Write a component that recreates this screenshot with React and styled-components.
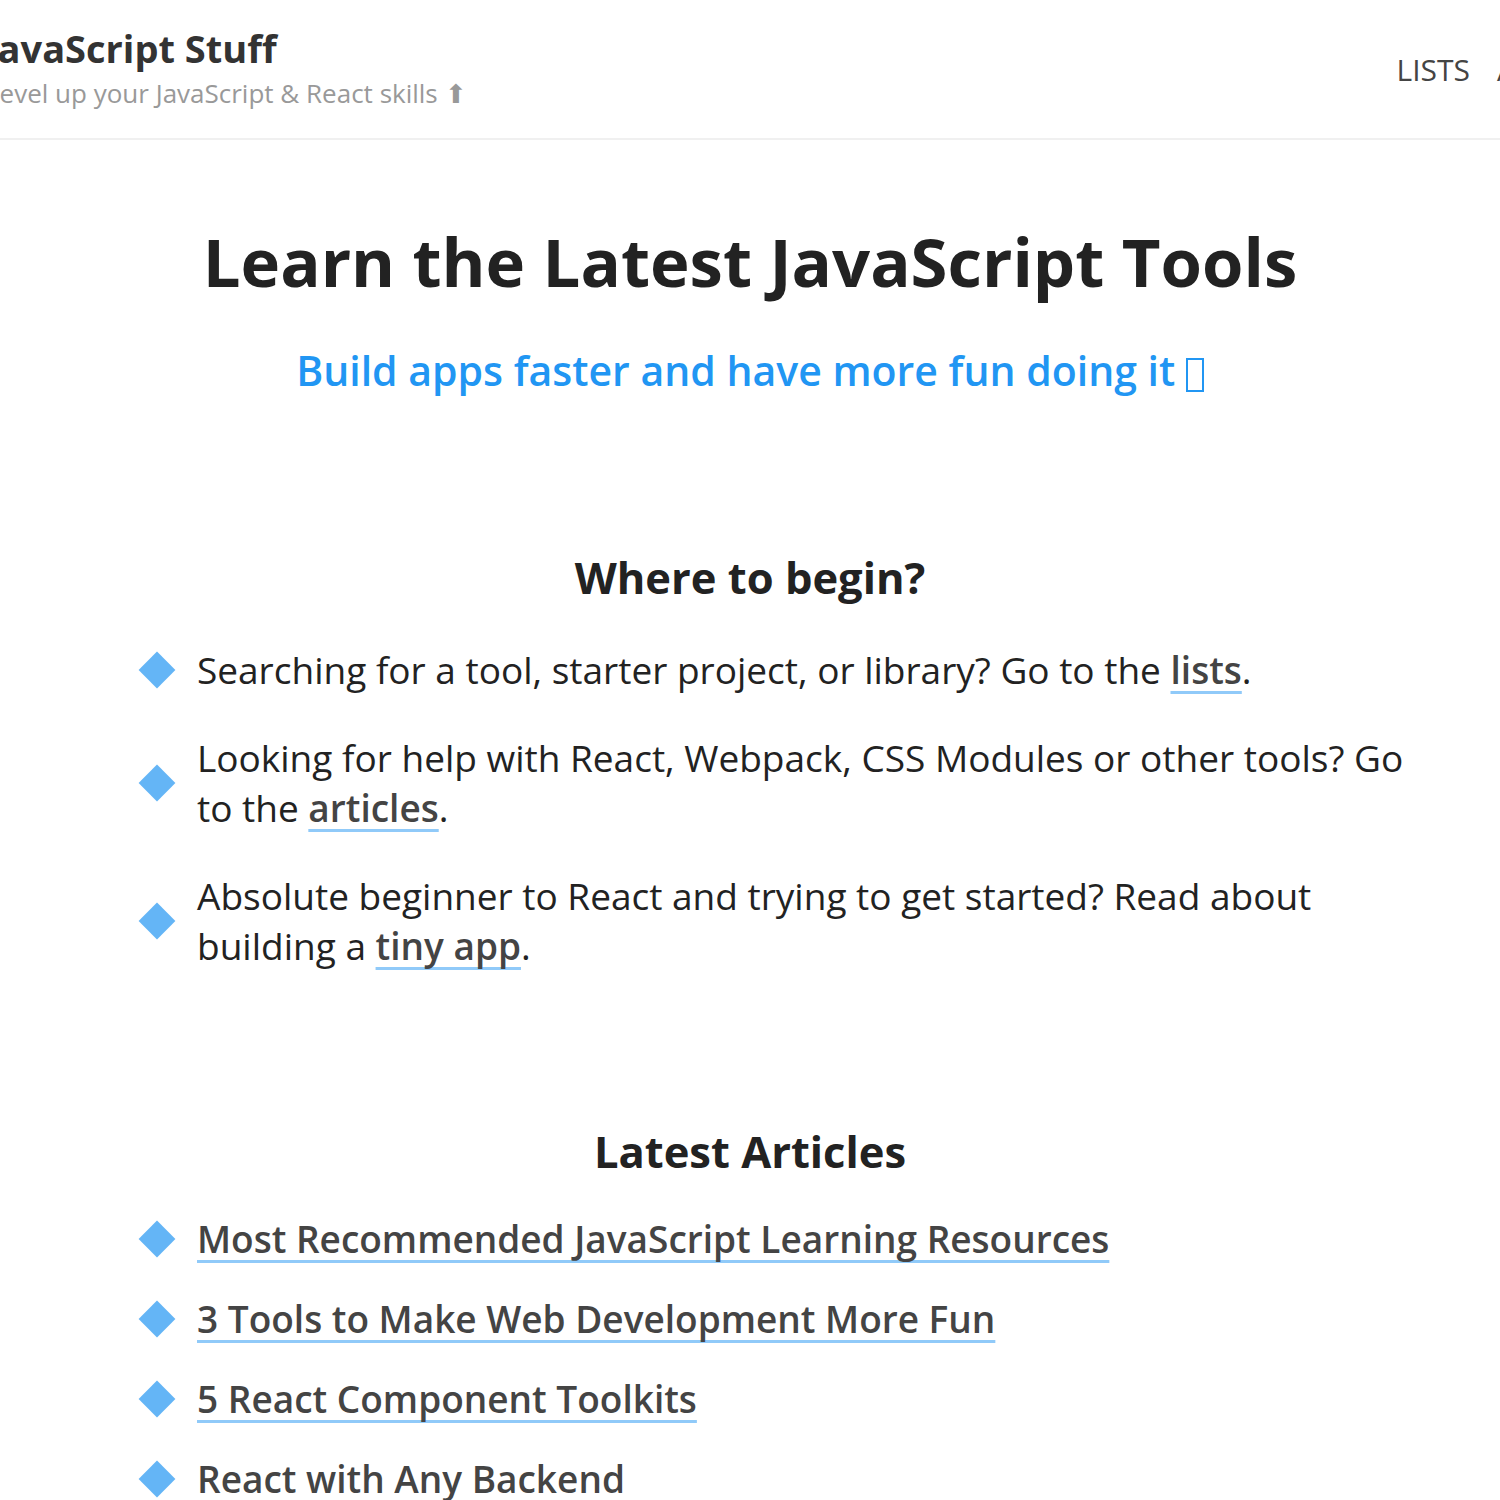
import React from 'react';
import styled, { createGlobalStyle } from 'styled-components';

const GlobalStyle = createGlobalStyle`
  html, body {
    margin: 0;
    padding: 0;
    background: #fff;
    overflow: hidden;
  }
  body {
    font-family: "Open Sans", "Noto Sans", sans-serif;
    color: #222;
  }
`;

const Header = styled.header`
  display: flex;
  justify-content: space-between;
  align-items: center;
  height: 138px;
  margin: 0 0 0 -15px;
  padding-right: 3px;
  border-bottom: 2px solid #f0f0f0;
`;

const Brand = styled.div`
  display: flex;
  flex-direction: column;
  gap: 5px;
  padding-bottom: 2px;
`;

const SiteName = styled.div`
  font-size: 38px;
  font-weight: 700;
  color: #333;
  line-height: 44px;
`;

const Tagline = styled.div`
  font-size: 26px;
  color: #999;
  line-height: 36px;
  padding-left: 1px;
`;

const Nav = styled.nav`
  display: flex;
  gap: 27px;
  font-size: 30px;
  color: #444;
`;

// the last item runs past the window edge, as in the shot
const NavItem = styled.span`
  text-transform: uppercase;
  white-space: nowrap;
  ${({ $clipped }) => $clipped && 'width: 0;'}
`;

const Main = styled.main`
  padding: 0 90px;
`;

const Hero = styled.section`
  text-align: center;
  padding-top: 76px;
`;

const Title = styled.h1`
  margin: 0;
  font-size: 67px;
  font-weight: 700;
  line-height: 90px;
  color: #222;
`;

const Subtitle = styled.p`
  margin: 36px 0 0;
  font-size: 41px;
  font-weight: 600;
  color: #2196f3;
  line-height: 56px;
`;

const Tofu = styled.span`
  display: inline-block;
  width: 18px;
  height: 34px;
  border: 2px solid #2196f3;
  box-sizing: border-box;
  vertical-align: -6px;
`;

const Section = styled.section`
  padding-top: ${({ $top }) => $top}px;
`;

const SectionTitle = styled.h2`
  margin: 0 0 ${({ $gap }) => $gap}px;
  text-align: center;
  font-size: 43.5px;
  font-weight: 700;
  line-height: 56px;
  color: #222;
`;

const List = styled.ul`
  list-style: none;
  margin: 0;
  padding: 0 0 0 48px;
  display: flex;
  flex-direction: column;
  gap: ${({ $gap }) => $gap}px;
`;

const Item = styled.li`
  display: flex;
  align-items: center;
  gap: 21px;
  font-size: 37px;
  line-height: 50px;
`;

const Diamond = styled.span`
  flex: none;
  width: 38px;
  height: 38px;
  display: flex;
  align-items: center;
  justify-content: center;

  &::before {
    content: '';
    width: 26px;
    height: 26px;
    background: #64b5f6;
    transform: rotate(45deg);
  }
`;

const Text = styled.span`
  color: #222;
`;

const A = styled.a`
  color: #444;
  font-weight: 600;
  text-decoration: underline;
  text-decoration-color: #90caf9;
  text-decoration-thickness: 3px;
  text-underline-offset: 7px;
  text-decoration-skip-ink: none;
`;

const begin = [
  ['Searching for a tool, starter project, or library? Go to the ', 'lists', '.'],
  ['Looking for help with React, Webpack, CSS Modules or other tools? Go to the ', 'articles', '.'],
  ['Absolute beginner to React and trying to get started? Read about building a ', 'tiny app', '.'],
];

const articles = [
  'Most Recommended JavaScript Learning Resources',
  '3 Tools to Make Web Development More Fun',
  '5 React Component Toolkits',
  'React with Any Backend',
];

export default function App() {
  return (
    <>
      <GlobalStyle />
      <Header>
        <Brand>
          <SiteName>JavaScript Stuff</SiteName>
          <Tagline>Level up your JavaScript &amp; React skills ⬆</Tagline>
        </Brand>
        <Nav>
          <NavItem>Lists</NavItem>
          <NavItem $clipped>Articles</NavItem>
        </Nav>
      </Header>
      <Main>
        <Hero>
          <Title>Learn the Latest JavaScript Tools</Title>
          <Subtitle>
            Build apps faster and have more fun doing it <Tofu />
          </Subtitle>
        </Hero>
        <Section $top={152}>
          <SectionTitle $gap={39}>Where to begin?</SectionTitle>
          <List $gap={38}>
            {begin.map(([pre, link, post]) => (
              <Item key={link}>
                <Diamond />
                <Text>
                  {pre}
                  <A href="#">{link}</A>
                  {post}
                </Text>
              </Item>
            ))}
          </List>
        </Section>
        <Section $top={153}>
          <SectionTitle $gap={34}>Latest Articles</SectionTitle>
          <List $gap={30}>
            {articles.map((t) => (
              <Item key={t}>
                <Diamond />
                <A href="#">{t}</A>
              </Item>
            ))}
          </List>
        </Section>
      </Main>
    </>
  );
}
